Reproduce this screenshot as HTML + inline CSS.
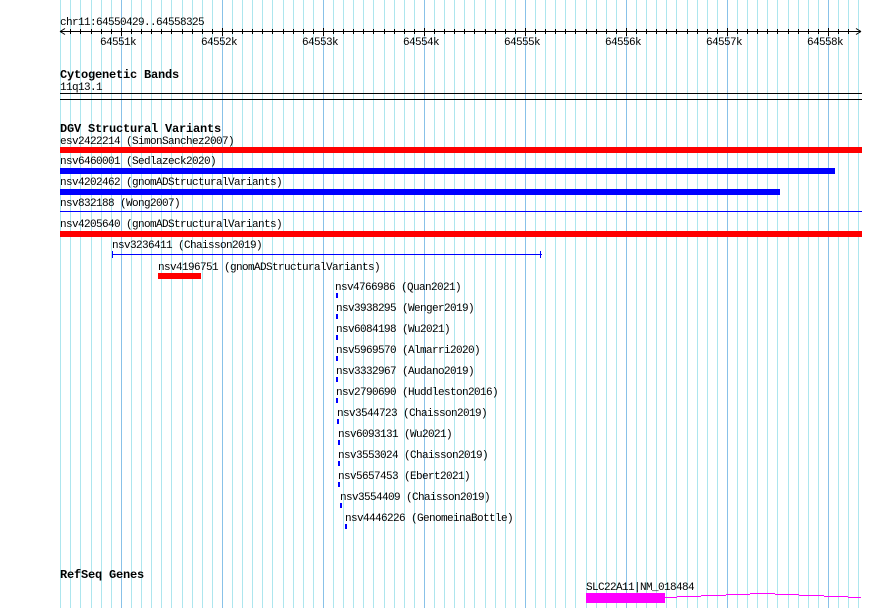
<!DOCTYPE html>
<html><head><meta charset="utf-8"><style>
html,body{margin:0;padding:0;background:#fff}
svg{display:block}
text{font-family:"Liberation Mono","DejaVu Sans Mono",monospace;font-size:11px;letter-spacing:-0.6px;fill:#000}
.b{font-weight:bold;font-size:12px;letter-spacing:-0.2px}
</style></head><body>
<svg width="890" height="608" viewBox="0 0 890 608" xmlns="http://www.w3.org/2000/svg">
<path stroke="#ade6ee" stroke-width="1" fill="none" d="M60.5 0V608M70.5 0V608M80.5 0V608M91.5 0V608M101.5 0V608M111.5 0V608M131.5 0V608M141.5 0V608M151.5 0V608M161.5 0V608M171.5 0V608M182.5 0V608M192.5 0V608M202.5 0V608M212.5 0V608M232.5 0V608M242.5 0V608M252.5 0V608M262.5 0V608M272.5 0V608M283.5 0V608M293.5 0V608M303.5 0V608M313.5 0V608M333.5 0V608M343.5 0V608M353.5 0V608M363.5 0V608M373.5 0V608M384.5 0V608M394.5 0V608M404.5 0V608M414.5 0V608M434.5 0V608M444.5 0V608M454.5 0V608M464.5 0V608M474.5 0V608M485.5 0V608M495.5 0V608M505.5 0V608M515.5 0V608M535.5 0V608M545.5 0V608M555.5 0V608M565.5 0V608M575.5 0V608M586.5 0V608M596.5 0V608M606.5 0V608M616.5 0V608M636.5 0V608M646.5 0V608M656.5 0V608M666.5 0V608M676.5 0V608M687.5 0V608M697.5 0V608M707.5 0V608M717.5 0V608M737.5 0V608M747.5 0V608M757.5 0V608M767.5 0V608M777.5 0V608M788.5 0V608M798.5 0V608M808.5 0V608M818.5 0V608M838.5 0V608M848.5 0V608M858.5 0V608"/>
<path stroke="#88c2e8" stroke-width="1" fill="none" d="M121.5 0V608M222.5 0V608M323.5 0V608M424.5 0V608M525.5 0V608M626.5 0V608M727.5 0V608M828.5 0V608"/>

<text x="60" y="25">chr11:64550429..64558325</text>
<path stroke="#000" stroke-width="1" fill="none" d="M60 31.5H861M60 31.5l5 -3M60 31.5l5 3M861 31.5l-5 -3M861 31.5l-5 3"/>
<path stroke="#000" stroke-width="1" fill="none" d="M70.5 29V34M80.5 29V34M91.5 29V34M101.5 29V34M111.5 29V34M131.5 29V34M141.5 29V34M151.5 29V34M161.5 29V34M171.5 29V34M182.5 29V34M192.5 29V34M202.5 29V34M212.5 29V34M232.5 29V34M242.5 29V34M252.5 29V34M262.5 29V34M272.5 29V34M283.5 29V34M293.5 29V34M303.5 29V34M313.5 29V34M333.5 29V34M343.5 29V34M353.5 29V34M363.5 29V34M373.5 29V34M384.5 29V34M394.5 29V34M404.5 29V34M414.5 29V34M434.5 29V34M444.5 29V34M454.5 29V34M464.5 29V34M474.5 29V34M485.5 29V34M495.5 29V34M505.5 29V34M515.5 29V34M535.5 29V34M545.5 29V34M555.5 29V34M565.5 29V34M575.5 29V34M586.5 29V34M596.5 29V34M606.5 29V34M616.5 29V34M636.5 29V34M646.5 29V34M656.5 29V34M666.5 29V34M676.5 29V34M687.5 29V34M697.5 29V34M707.5 29V34M717.5 29V34M737.5 29V34M747.5 29V34M757.5 29V34M767.5 29V34M777.5 29V34M788.5 29V34M798.5 29V34M808.5 29V34M818.5 29V34M838.5 29V34M848.5 29V34M121.5 28V36M222.5 28V36M323.5 28V36M424.5 28V36M525.5 28V36M626.5 28V36M727.5 28V36M828.5 28V36"/>
<text x="100" y="45">64551k</text>
<text x="201" y="45">64552k</text>
<text x="302" y="45">64553k</text>
<text x="403" y="45">64554k</text>
<text x="504" y="45">64555k</text>
<text x="605" y="45">64556k</text>
<text x="706" y="45">64557k</text>
<text x="807" y="45">64558k</text>

<text class="b" x="60" y="78">Cytogenetic Bands</text>
<text x="60" y="90">11q13.1</text>
<rect x="60" y="93" width="802" height="1" fill="#000"/>
<rect x="60" y="99" width="802" height="1" fill="#000"/>

<text class="b" x="60" y="132">DGV Structural Variants</text>
<text x="60" y="144">esv2422214 (SimonSanchez2007)</text>
<rect x="60" y="147" width="802" height="6" fill="#f00"/>
<text x="60" y="164">nsv6460001 (Sedlazeck2020)</text>
<rect x="60" y="168" width="775" height="6" fill="#00f"/>
<text x="60" y="185">nsv4202462 (gnomADStructuralVariants)</text>
<rect x="60" y="189" width="720" height="6" fill="#00f"/>
<text x="60" y="206">nsv832188 (Wong2007)</text>
<rect x="60" y="211" width="802" height="1" fill="#00f"/>
<text x="60" y="227">nsv4205640 (gnomADStructuralVariants)</text>
<rect x="60" y="231" width="802" height="6" fill="#f00"/>
<text x="112" y="248">nsv3236411 (Chaisson2019)</text>
<rect x="112" y="254" width="430" height="1" fill="#00f"/>
<rect x="112" y="251" width="1" height="7" fill="#00f"/>
<rect x="540" y="251" width="1" height="7" fill="#00f"/>
<text x="158" y="270">nsv4196751 (gnomADStructuralVariants)</text>
<rect x="158" y="273" width="43" height="6" fill="#f00"/>

<text x="335" y="290">nsv4766986 (Quan2021)</text><rect x="336" y="293" width="2" height="5" fill="#00f"/>
<text x="336" y="311">nsv3938295 (Wenger2019)</text><rect x="336" y="314" width="2" height="5" fill="#00f"/>
<text x="336" y="332">nsv6084198 (Wu2021)</text><rect x="336" y="335" width="2" height="5" fill="#00f"/>
<text x="336" y="353">nsv5969570 (Almarri2020)</text><rect x="336" y="356" width="2" height="5" fill="#00f"/>
<text x="336" y="374">nsv3332967 (Audano2019)</text><rect x="336" y="377" width="2" height="5" fill="#00f"/>
<text x="336" y="395">nsv2790690 (Huddleston2016)</text><rect x="336" y="398" width="2" height="5" fill="#00f"/>
<text x="337" y="416">nsv3544723 (Chaisson2019)</text><rect x="337" y="419" width="2" height="5" fill="#00f"/>
<text x="338" y="437">nsv6093131 (Wu2021)</text><rect x="338" y="440" width="2" height="5" fill="#00f"/>
<text x="338" y="458">nsv3553024 (Chaisson2019)</text><rect x="338" y="461" width="2" height="5" fill="#00f"/>
<text x="338" y="479">nsv5657453 (Ebert2021)</text><rect x="338" y="482" width="2" height="5" fill="#00f"/>
<text x="340" y="500">nsv3554409 (Chaisson2019)</text><rect x="340" y="503" width="2" height="5" fill="#00f"/>
<text x="345" y="521">nsv4446226 (GenomeinaBottle)</text><rect x="345" y="524" width="2" height="5" fill="#00f"/>

<text class="b" x="60" y="578">RefSeq Genes</text>
<text x="586" y="590">SLC22A11|NM_018484</text>
<rect x="586" y="593" width="79" height="10" fill="#f0f"/>
<path stroke="#f0f" stroke-width="1" fill="none" d="M665 597.5H677M677 596.5H701M701 595.5H726M726 594.5H750M750 593.5H775M775 594.5H799M799 595.5H824M824 596.5H848M848 597.5H861"/>
</svg>
</body></html>
